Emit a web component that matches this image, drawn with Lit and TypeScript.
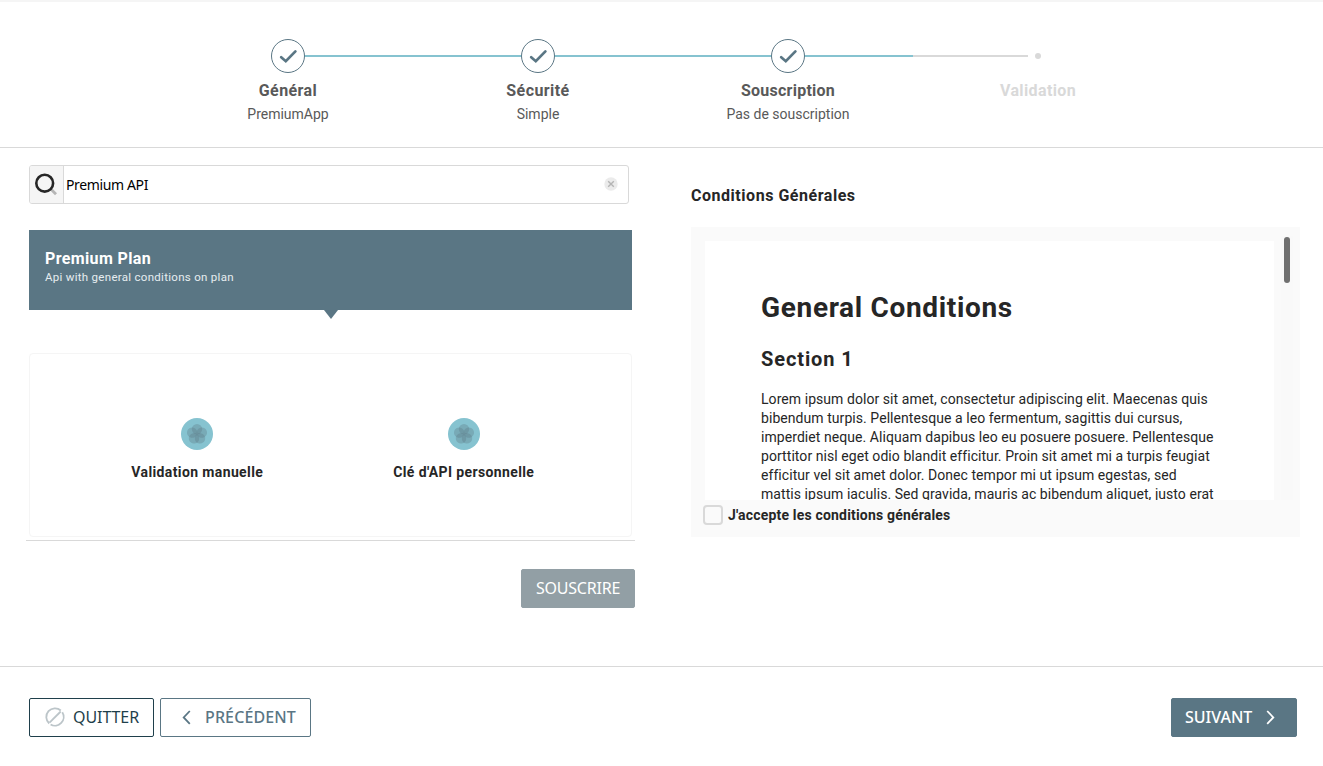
import { LitElement, html, css, svg, nothing } from "lit";

interface Step {
  title: string;
  detail?: string;
  done: boolean;
  cls: string;
}

const steps: Step[] = [
  { title: "Général", detail: "PremiumApp", done: true, cls: "general" },
  { title: "Sécurité", detail: "Simple", done: true, cls: "security" },
  { title: "Souscription", detail: "Pas de souscription", done: true, cls: "subscription" },
  { title: "Validation", done: false, cls: "validation" },
];

const conditions = [
  "Lorem ipsum dolor sit amet, consectetur adipiscing elit. Maecenas quis",
  "bibendum turpis. Pellentesque a leo fermentum, sagittis dui cursus,",
  "imperdiet neque. Aliquam dapibus leo eu posuere posuere. Pellentesque",
  "porttitor nisl eget odio blandit efficitur. Proin sit amet mi a turpis feugiat",
  "efficitur vel sit amet dolor. Donec tempor mi ut ipsum egestas, sed",
  "mattis ipsum iaculis. Sed gravida, mauris ac bibendum aliquet, justo erat",
];

const petals = [0, 72, 144, 216, 288];

class AppRoot extends LitElement {
  static styles = css`
    :host {
      display: block;
      height: 766px;
      overflow: hidden;
      box-sizing: border-box;
      background: #fff;
      color: #262626;
      font-family: Roboto, "Noto Sans", sans-serif;
      font-size: 14px;
    }
    * {
      box-sizing: border-box;
    }
    svg {
      display: block;
      flex: none;
    }
    .page {
      display: flex;
      flex-direction: column;
      height: 766px;
    }

    .stepper {
      display: flex;
      height: 148px;
      padding: 37px 0 0 163px;
      border-top: 2px solid #f5f5f5;
      border-bottom: 1px solid #d9d9d9;
    }
    .step {
      width: 250px;
      display: flex;
      flex-direction: column;
      align-items: center;
    }
    .track {
      display: flex;
      align-items: center;
      width: 250px;
      height: 34px;
    }
    .bar {
      flex: 1;
      height: 2px;
      background: #86c3d0;
    }
    .step:first-child .bar:first-child,
    .step:last-child .bar:last-child {
      background: none;
    }
    .todo .bar {
      background: #d9d9d9;
    }
    .subscription .bar:last-child {
      background: linear-gradient(90deg, #86c3d0 0 108px, #d9d9d9 108px);
    }
    .dot {
      width: 6px;
      height: 6px;
      margin: 0 7px;
      border-radius: 50%;
      background: #d9d9d9;
    }
    .step-title {
      margin-top: 6px;
      font-size: 16px;
      font-weight: 700;
      line-height: 24px;
      color: #595959;
      letter-spacing: 0.42px;
    }
    .subscription .step-title {
      letter-spacing: 0.25px;
    }
    .todo .step-title {
      color: #d9d9d9;
      letter-spacing: 0.37px;
    }
    .step-detail {
      margin-top: 1px;
      line-height: 20px;
      color: #595959;
    }

    .main {
      display: flex;
      height: 518px;
    }
    .left {
      width: 609px;
      margin-left: 26px;
      display: flex;
      flex-direction: column;
    }
    .search {
      display: flex;
      align-items: center;
      width: 600px;
      height: 39px;
      margin: 17px 0 0 3px;
      padding-right: 10px;
      border: 1px solid #d9d9d9;
      border-radius: 3px;
    }
    .addon {
      display: flex;
      align-items: center;
      justify-content: center;
      width: 34px;
      height: 37px;
      background: #f5f5f5;
      border-right: 1px solid #d9d9d9;
      border-radius: 2px 0 0 2px;
    }
    .query {
      flex: 1;
      padding-left: 2px;
      font-family: "Noto Sans", sans-serif;
      color: #000;
      letter-spacing: -0.37px;
    }
    .clear {
      margin-bottom: 1px;
    }
    .plan {
      display: flex;
      flex-direction: column;
      width: 603px;
      height: 80px;
      margin: 26px 0 0 3px;
      padding: 19px 16px 0;
      background: #5a7684;
      color: #fff;
    }
    .plan-title {
      font-size: 16px;
      font-weight: 700;
      line-height: 20px;
      letter-spacing: 0.37px;
    }
    .plan-text {
      font-size: 11.5px;
      line-height: 16px;
      letter-spacing: 0.29px;
      color: #e6edf0;
    }
    .pointer {
      align-self: center;
      width: 0;
      height: 0;
      border: 7.5px solid transparent;
      border-top: 9px solid #5a7684;
      border-bottom: 0;
    }
    .features {
      display: flex;
      width: 603px;
      height: 184px;
      margin: 34px 0 0 3px;
      padding: 64px 34px 0;
      border: 1px solid #f5f5f5;
      border-radius: 4px;
    }
    .feature {
      flex: 1;
      display: flex;
      flex-direction: column;
      align-items: center;
      gap: 12px;
      font-weight: 700;
      line-height: 20px;
      letter-spacing: 0.38px;
    }
    .rule {
      height: 1px;
      margin-top: 3px;
      background: #d9d9d9;
    }
    .btn {
      display: flex;
      align-items: center;
      height: 39px;
      padding: 0 0 2px;
      border: 1px solid;
      border-radius: 2px;
      background: #fff;
      font: 400 16px/20px "Noto Sans", sans-serif;
    }
    .subscribe {
      align-self: flex-end;
      justify-content: center;
      width: 114px;
      margin-top: 28px;
      border-color: #929fa5;
      background: #929fa5;
      color: #fff;
      letter-spacing: -0.22px;
    }

    .right {
      width: 609px;
      margin-left: 56px;
    }
    .heading {
      margin: 38px 0 0;
      font-size: 16px;
      font-weight: 700;
      line-height: 20px;
      letter-spacing: 0.53px;
    }
    .panel {
      height: 310px;
      margin-top: 21px;
      background: #fafafa;
    }
    .scroller {
      display: flex;
      height: 273px;
      padding-left: 14px;
      overflow: hidden;
    }
    .document {
      width: 569px;
      height: 259px;
      margin-top: 14px;
      padding: 49px 0 0 56px;
      background: #fff;
      overflow: hidden;
    }
    .document h1 {
      margin: 0;
      font-size: 28px;
      line-height: 36px;
      letter-spacing: 0.66px;
    }
    .document h2 {
      margin: 19px 0 0;
      font-size: 20px;
      line-height: 28px;
      letter-spacing: 0.9px;
    }
    .document p {
      margin: 17px 0 0;
      line-height: 19px;
      letter-spacing: 0.06px;
      white-space: nowrap;
    }
    .scrollbar {
      width: 12px;
      height: 264px;
      margin: 9px 0 0 7px;
      padding: 1px 3px;
      background: #f9f9f9;
    }
    .thumb {
      width: 6px;
      height: 46px;
      border-radius: 3px;
      background: #707070;
    }
    .accept {
      display: flex;
      align-items: center;
      gap: 5px;
      height: 20px;
      margin: 1px 0 0 12px;
      padding-top: 8px;
      box-sizing: content-box;
      margin-top: -3px;
      font-weight: 700;
      letter-spacing: 0.18px;
    }
    .box {
      width: 20px;
      height: 20px;
      border: 2px solid #d9d9d9;
      border-radius: 4px;
    }

    .footer {
      display: flex;
      gap: 6px;
      height: 100px;
      padding: 31px 26px 0 29px;
      border-top: 1px solid #d9d9d9;
    }
    .quit {
      width: 125px;
      padding-left: 15px;
      gap: 8px;
      border-color: #1f3f4b;
      color: #1f3f4b;
      letter-spacing: -0.08px;
    }
    .previous {
      width: 151px;
      padding-left: 16px;
      gap: 9px;
      border-color: #5a7684;
      color: #5a7684;
      font-weight: 500;
      letter-spacing: 0.12px;
    }
    .next {
      width: 126px;
      margin-left: auto;
      padding-left: 13px;
      gap: 9px;
      border-color: #5a7684;
      background: #5a7684;
      color: #fff;
      font-weight: 500;
    }
  `;

  private check() {
    return svg`<svg width="34" height="34" viewBox="0 0 34 34" fill="none" stroke="#5a7684">
      <circle cx="17" cy="17" r="16.5" stroke-width="1"></circle>
      <path d="M10.2 18.2 L14.8 22.2 L24.4 12.4" stroke-width="2.7" stroke-linecap="round"></path>
    </svg>`;
  }

  private flower() {
    return svg`<svg width="32" height="32" viewBox="0 0 32 32">
      <circle cx="16" cy="16" r="16" fill="#86c3d0"></circle>
      ${petals.map(
        (a) => svg`<circle cx="16" cy="11.1" r="5.2" fill="#5a7684" fill-opacity=".33" transform=${`rotate(${a} 16 16.2)`}></circle>`,
      )}
    </svg>`;
  }

  private step(s: Step) {
    return html`<div class="step ${s.cls} ${s.done ? "" : "todo"}">
      <div class="track">
        <div class="bar"></div>
        ${s.done ? this.check() : html`<div class="dot"></div>`}
        <div class="bar"></div>
      </div>
      <div class="step-title">${s.title}</div>
      ${s.detail ? html`<div class="step-detail">${s.detail}</div>` : nothing}
    </div>`;
  }

  render() {
    return html`<div class="page">
      <header class="stepper">${steps.map((s) => this.step(s))}</header>

      <main class="main">
        <section class="left">
          <div class="search">
            <div class="addon">
              <svg width="24" height="26" viewBox="0 0 24 26" fill="none">
                <path d="M15.8 17 L21 22.2" stroke="#b5b5b5" stroke-width="2.8"></path>
                <circle cx="9.7" cy="11.2" r="8.4" stroke="#262626" stroke-width="2.6"></circle>
              </svg>
            </div>
            <div class="query">Premium API</div>
            <svg class="clear" width="14" height="14" viewBox="0 0 14 14">
              <circle cx="7" cy="7" r="6.7" fill="#ebebeb"></circle>
              <path d="M4.2 4.2 L9.8 9.8 M9.8 4.2 L4.2 9.8" stroke="#b4b4b4" stroke-width="1.4"></path>
            </svg>
          </div>
          <div class="plan">
            <div class="plan-title">Premium Plan</div>
            <div class="plan-text">Api with general conditions on plan</div>
          </div>
          <div class="pointer"></div>
          <div class="features">
            <div class="feature">${this.flower()}<span>Validation manuelle</span></div>
            <div class="feature">${this.flower()}<span>Clé d'API personnelle</span></div>
          </div>
          <div class="rule"></div>
          <button class="btn subscribe">SOUSCRIRE</button>
        </section>

        <section class="right">
          <h3 class="heading">Conditions Générales</h3>
          <div class="panel">
            <div class="scroller">
              <article class="document">
                <h1>General Conditions</h1>
                <h2>Section 1</h2>
                <p>${conditions.map((line) => html`${line}<br />`)}</p>
              </article>
              <div class="scrollbar"><div class="thumb"></div></div>
            </div>
            <label class="accept"><span class="box"></span>J'accepte les conditions générales</label>
          </div>
        </section>
      </main>

      <footer class="footer">
        <button class="btn quit">
          <svg width="20" height="20" viewBox="0 0 20 20" fill="none" stroke="#bcc5c9" stroke-width="1.8">
            <path d="M15.8 3.5 A8.7 8.7 0 1 0 4.2 16.5"></path>
            <path d="M5.6 17.5 A8.7 8.7 0 0 0 17.3 5.3"></path>
            <path d="M4.5 15.7 L15.7 4.5"></path>
          </svg>
          <span>QUITTER</span>
        </button>
        <button class="btn previous">
          <svg width="19" height="20" viewBox="0 0 19 20" fill="none" stroke="#5a7684" stroke-width="1.8">
            <path d="M12.8 4 L6.7 10.4 L12.8 16.8"></path>
          </svg>
          <span>PRÉCÉDENT</span>
        </button>
        <button class="btn next">
          <span>SUIVANT</span>
          <svg width="19" height="20" viewBox="0 0 19 20" fill="none" stroke="#fff" stroke-width="1.8">
            <path d="M6.2 4 L12.3 10.4 L6.2 16.8"></path>
          </svg>
        </button>
      </footer>
    </div>`;
  }
}

customElements.define("app-root", AppRoot);
